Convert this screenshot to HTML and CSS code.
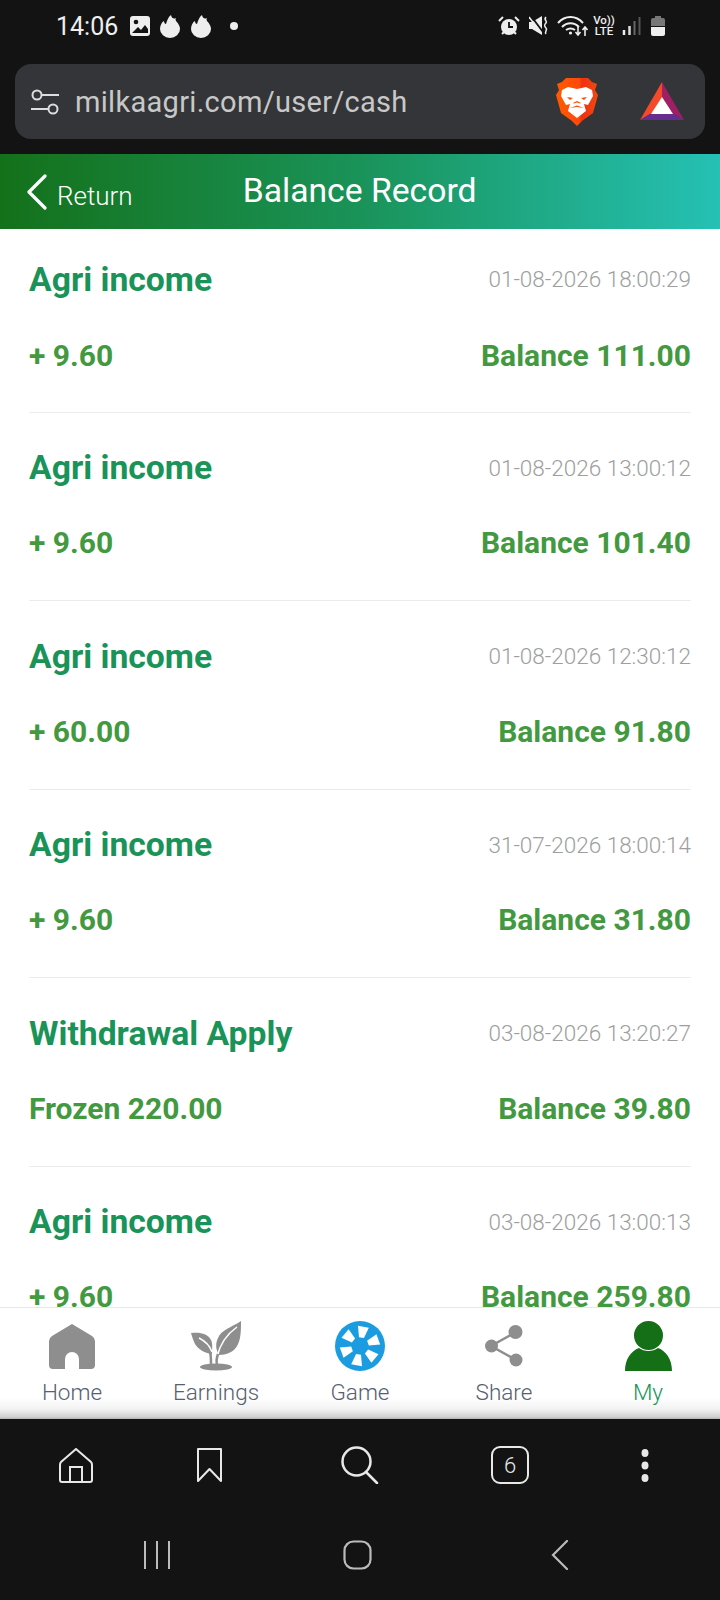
FILE: index.html
```html
<!DOCTYPE html>
<html lang="en">
<head>
<meta charset="utf-8">
<title>Balance Record</title>
<link rel="stylesheet" href="styles.css">
</head>
<body>
<div class="phone">
  <div class="status">
    <div class="status-left">
      <span class="time">14:06</span>
      <svg class="si" width="22" height="22" viewBox="0 0 22 22"><rect x="1" y="1" width="20" height="20" rx="3" fill="#eee"/><circle cx="7" cy="7" r="2.3" fill="#131313"/><path d="M3 18l6-6 3 3 4-5 3 4v4z" fill="#131313"/></svg>
      <svg class="si fl1" width="22" height="24" viewBox="0 0 22 24"><path d="M12 1c1 4 3 4 5 3 0 0-1 2 0 3 3 3 4 6 4 8a10 9 0 0 1-20 0c0-4 2-7 4-8 0 2 1 3 2 3 1-3 2-7 5-9z" fill="#eee"/></svg>
      <svg class="si fl2" width="22" height="24" viewBox="0 0 22 24"><path d="M12 1c1 4 3 4 5 3 0 0-1 2 0 3 3 3 4 6 4 8a10 9 0 0 1-20 0c0-4 2-7 4-8 0 2 1 3 2 3 1-3 2-7 5-9z" fill="#eee"/></svg>
      <span class="dot"></span>
    </div>
    <div class="status-right">
      <svg width="22" height="20" viewBox="0 0 22 20"><circle cx="11" cy="11" r="8" fill="#eee"/><path d="M11 6v5h4" fill="none" stroke="#131313" stroke-width="1.8"/><path d="M1 5l4-4M21 5l-4-4M4 18l2-2M18 18l-2-2" stroke="#eee" stroke-width="2"/></svg>
      <svg class="mute" width="20" height="20" viewBox="0 0 20 20"><path d="M0 6h3L13 0v19L3 13H0z" fill="#eee"/><path d="M2 0l12 16" stroke="#131313" stroke-width="1.800"/><path d="M0 1l12 16" stroke="#eee" stroke-width="1.600"/><path d="M17 1c-3 3 2 4 0 6s-2 3 0 5-2 4 0 6" fill="none" stroke="#eee" stroke-width="1.6"/></svg>
      <svg class="wifi" width="31" height="22" viewBox="0 0 31 22"><path d="M1 8c7-8 18-8 25 0M5 12c5-5 12-5 17 0M9 15c3-2 6-2 9 0" fill="none" stroke="#eee" stroke-width="2"/><circle cx="13.5" cy="18" r="1.6" fill="#eee"/><path d="M21 11v9m-2.500-3l2.500 3 2.500-3M28 21v-9m-2.500 3l2.500-3 2.500 3" fill="none" stroke="#eee" stroke-width="1.600"/></svg>
      <span class="volte"><span>Vo))</span><span>LTE</span></span>
      <svg class="signal" width="19" height="20" viewBox="0 0 19 20"><path d="M2 14v5" stroke="#eee" stroke-width="2.500"/><path d="M7.500 10v9" stroke="#ddd" stroke-width="2.500"/><path d="M12.500 5v14" stroke="#666" stroke-width="2"/><path d="M17.500 1v18" stroke="#555" stroke-width="2"/></svg>
      <svg class="batt" width="14" height="20" viewBox="0 0 14 20"><path d="M4 0h6v2h2a2 2 0 0 1 2 2v6H0V4a2 2 0 0 1 2-2h2z" fill="#777"/><path d="M0 11h14v7a2 2 0 0 1-2 2H2a2 2 0 0 1-2-2z" fill="#eee"/></svg>
    </div>
  </div>

  <div class="urlwrap">
    <div class="urlbar">
      <svg width="28" height="28" viewBox="0 0 28 28"><circle cx="6" cy="7" r="4.500" fill="none" stroke="#ddd" stroke-width="2"/><path d="M11 7h17M0 21h17" stroke="#ddd" stroke-width="2"/><circle cx="22" cy="21" r="4.500" fill="none" stroke="#ddd" stroke-width="2"/></svg>
      <span class="url">milkaagri.com/user/cash</span>
      <svg class="brave" width="42" height="49" viewBox="0 0 42 49"><defs><linearGradient id="bg" x1="0" x2="1" y1="0" y2="0"><stop offset="0" stop-color="#ff5a00"/><stop offset=".55" stop-color="#ff4a0a"/><stop offset=".62" stop-color="#f03010"/><stop offset="1" stop-color="#f04a10"/></linearGradient></defs><path d="M10 1h22l4 4 5 2-2 6 3 5-5 18-11 8-5 5-5-5-11-8-5-18 3-5-2-6 5-2z" fill="url(#bg)"/><path d="M6 13l6-3 9 2 9-2 6 3 1 6-5 9-4-1 2 7-9 7-9-7 2-7-4 1-5-9z" fill="#fff"/><path d="M11 20l6 1-3 2zM31 20l-6 1 3 2zM14 31l7-2.500 7 2.500-7-1zM17 26l4-2 4 2-1 .5-3-1-3 1z" fill="#f2500c"/></svg>
      <svg class="bat" width="44" height="39" viewBox="0 0 44 39"><path d="M22 0L0 38l22-13z" fill="#f4492a"/><path d="M22 0l22 38-22-13z" fill="#9e1f63"/><path d="M0 38h44L22 25z" fill="#662d91"/><path d="M22 15l11 17H11z" fill="#fff"/></svg>
    </div>
  </div>

  <header class="header">
    <div class="back">
      <svg width="22" height="36" viewBox="0 0 22 36"><path d="M19 2L3 18l16 16" fill="none" stroke="#fff" stroke-width="3.200" stroke-linecap="round" stroke-linejoin="round"/></svg>
      <span>Return</span>
    </div>
    <h1>Balance Record</h1>
  </header>

  <main class="list">
    <div class="rec"><div class="line"><span class="name">Agri income</span><span class="date">01-08-2026 18:00:29</span></div><div class="line"><span class="amt">+ 9.60</span><span class="amt">Balance 111.00</span></div></div>
    <div class="rec"><div class="line"><span class="name">Agri income</span><span class="date">01-08-2026 13:00:12</span></div><div class="line"><span class="amt">+ 9.60</span><span class="amt">Balance 101.40</span></div></div>
    <div class="rec"><div class="line"><span class="name">Agri income</span><span class="date">01-08-2026 12:30:12</span></div><div class="line"><span class="amt">+ 60.00</span><span class="amt">Balance 91.80</span></div></div>
    <div class="rec"><div class="line"><span class="name">Agri income</span><span class="date">31-07-2026 18:00:14</span></div><div class="line"><span class="amt">+ 9.60</span><span class="amt">Balance 31.80</span></div></div>
    <div class="rec"><div class="line"><span class="name">Withdrawal Apply</span><span class="date">03-08-2026 13:20:27</span></div><div class="line"><span class="amt">Frozen 220.00</span><span class="amt">Balance 39.80</span></div></div>
    <div class="rec"><div class="line"><span class="name">Agri income</span><span class="date">03-08-2026 13:00:13</span></div><div class="line"><span class="amt">+ 9.60</span><span class="amt">Balance 259.80</span></div></div>
  </main>

  <nav class="tabs">
    <div class="tab">
      <svg width="46" height="50" viewBox="0 0 46 50"><path d="M23 3L43 15q3 2 3 5v24q0 4-4 4H30V38a7 7 0 0 0-14 0V48H4q-4 0-4-4V20q0-3 3-5z" fill="#8e8e8e"/></svg>
      <span>Home</span>
    </div>
    <div class="tab">
      <svg width="52" height="50" viewBox="0 0 52 50"><ellipse cx="26" cy="46" rx="16" ry="3.500" fill="#8e8e8e"/><path d="M1 12c10-1 17 1 20 7 2 4 1 9 1 14-8-1-14-5-17-10C3 19 2 15 1 12z" fill="#8e8e8e"/><path d="M51 0c0 9 0 19-4 25-3 6-11 9-18 9-3-5-4-11-1-17C31 9 42 6 51 0z" fill="#8e8e8e"/><path d="M9 17c6 3 11 8 13 14M47 6C37 13 30 23 27 36" fill="none" stroke="#fff" stroke-width="1.500"/><path d="M21 43c0-5 0-9-1-12M27 43c-1-3 0-7 1-10" fill="none" stroke="#8e8e8e" stroke-width="2.500"/></svg>
      <span>Earnings</span>
    </div>
    <div class="tab">
      <svg width="50" height="50" viewBox="0 0 50 50"><circle cx="25" cy="25" r="25" fill="#1b9ce0"/><g fill="#fff"><path d="M19.500 5.500l11 0-3 11h-5z" transform="rotate(10 25 25)"/><path d="M19.500 5.500l11 0-3 11h-5z" transform="rotate(70 25 25)"/><path d="M19.500 5.500l11 0-3 11h-5z" transform="rotate(130 25 25)"/><path d="M19.500 5.500l11 0-3 11h-5z" transform="rotate(190 25 25)"/><path d="M19.500 5.500l11 0-3 11h-5z" transform="rotate(250 25 25)"/><path d="M19.500 5.500l11 0-3 11h-5z" transform="rotate(310 25 25)"/></g><circle cx="25" cy="25" r="7.500" fill="#1b9ce0"/></svg>
      <span>Game</span>
    </div>
    <div class="tab">
      <svg width="38" height="42" class="share" viewBox="0 0 38 42"><path d="M31 7L6 21l25 14" fill="none" stroke="#8e8e8e" stroke-width="2.500"/><circle cx="30.500" cy="7" r="7" fill="#8e8e8e"/><circle cx="6.500" cy="21" r="6.500" fill="#8e8e8e"/><circle cx="31" cy="35" r="6.500" fill="#8e8e8e"/></svg>
      <span>Share</span>
    </div>
    <div class="tab active">
      <svg width="47" height="50" viewBox="0 0 47 50"><circle cx="23.500" cy="14.500" r="14.500" fill="#156f17"/><path d="M0 50c0-12 6-20 14-23 5 4 14 4 19 0 8 3 14 11 14 23z" fill="#156f17"/></svg>
      <span>My</span>
    </div>
  </nav>

  <div class="bottom">
    <div class="toolbar">
      <svg width="34" height="35" viewBox="0 0 34 35"><path d="M17 1L32 14q1 1 1 3v15q0 2-2 2H3q-2 0-2-2V17q0-2 1-3z" fill="none" stroke="#e8e8e8" stroke-width="2"/><path d="M11 34V19h12v15" fill="none" stroke="#e8e8e8" stroke-width="2"/></svg>
      <svg width="25" height="34" viewBox="0 0 25 34"><path d="M1 1h23v32l-11.500-12L1 33z" fill="none" stroke="#e8e8e8" stroke-width="2" stroke-linejoin="round"/></svg>
      <svg width="38" height="38" viewBox="0 0 38 38"><circle cx="15.500" cy="15.500" r="14" fill="none" stroke="#e8e8e8" stroke-width="2.500"/><path d="M25 26l11 11" stroke="#e8e8e8" stroke-width="2.500" stroke-linecap="round"/></svg>
      <span class="count">6</span>
      <svg width="10" height="36" viewBox="0 0 10 36"><ellipse cx="5" cy="6" rx="3.500" ry="4" fill="#e8e8e8"/><ellipse cx="5" cy="18.500" rx="3.500" ry="4" fill="#e8e8e8"/><ellipse cx="5" cy="31" rx="3.500" ry="4" fill="#e8e8e8"/></svg>
    </div>
    <div class="sysnav">
      <svg width="28" height="30" viewBox="0 0 28 30"><path d="M2 1v28M14 1v28M26 1v28" stroke="#bbb" stroke-width="2"/></svg>
      <svg width="29" height="30" viewBox="0 0 29 30"><rect x="1.500" y="1.500" width="26" height="27" rx="9" fill="none" stroke="#bbb" stroke-width="2.200"/></svg>
      <svg width="18" height="30" viewBox="0 0 18 30"><path d="M16 1L2 15l14 14" fill="none" stroke="#bbb" stroke-width="2.200" stroke-linecap="round"/></svg>
    </div>
  </div>
</div>
</body>
</html>
```

FILE: styles.css
```css
* { box-sizing: border-box; }
html, body { margin: 0; padding: 0; background: #131313; }
.phone {
  width: 720px;
  height: 1600px;
  display: flex;
  flex-direction: column;
  overflow: hidden;
  font-family: Roboto, "Liberation Sans", sans-serif;
  background: #131313;
}
svg { display: block; flex: none; }

/* status bar */
.status {
  height: 52px;
  flex: none;
  display: flex;
  justify-content: space-between;
  align-items: center;
  padding: 0 55px 0 56px;
  color: #eee;
}
.status-left, .status-right { display: flex; align-items: center; }
.time { font-size: 25px; font-weight: 400; width: 73px; }
.fl1 { margin-left: 8px; }
.fl2 { margin-left: 9px; }
.dot { width: 8px; height: 8px; border-radius: 50%; background: #eee; margin-left: 18px; }
.mute { margin-left: 9px; }
.wifi { margin-left: 8px; }
.volte {
  display: flex;
  flex-direction: column;
  font-size: 11.500px;
  line-height: 11px;
  font-weight: 500;
  width: 22px;
  margin-left: 5px;
  align-items: center;
}
.signal { margin-left: 7px; }
.batt { margin-left: 10px; }

/* address bar */
.urlwrap { height: 102px; flex: none; padding: 12px 15px 15px; }
.urlbar {
  height: 75px;
  background: #343538;
  border-radius: 16px;
  display: flex;
  align-items: center;
  padding: 0 21px 0 16px;
}
.url {
  flex: 1;
  margin-left: 16px;
  color: #c8c8c8;
  font-size: 29px;
  font-weight: 400;
  letter-spacing: 0.3px;
  white-space: nowrap;
}
.bat { margin-left: 42px; }

/* page header */
.header {
  height: 75px;
  flex: none;
  display: flex;
  align-items: center;
  padding-left: 26px;
  background: linear-gradient(90deg, #14711a 0%, #1a9359 50%, #25c1b4 100%);
  color: #fff;
}
.back { display: flex; align-items: center; gap: 9px; font-size: 26px; font-weight: 300; }
.back span { padding-top: 9px; }
.header h1 {
  margin: -3px 0 0 110px;
  font-size: 33.700px;
  font-weight: 400;
  white-space: nowrap;
}

/* list */
.list {
  flex: 1;
  min-height: 0;
  overflow: hidden;
  background: #fff;
  padding: 0 29px;
}
.rec {
  height: 188.500px;
  border-bottom: 1px solid #ececec;
  padding-top: 30px;
  display: flex;
  flex-direction: column;
  gap: 25px;
}
.rec:first-child { height: 183.500px; padding-top: 25px; gap: 26px; }
.line { display: flex; justify-content: space-between; align-items: center; height: 50px; white-space: nowrap; }
.name { font-size: 33.700px; font-weight: 700; color: #1a9359; }
.date { font-size: 22.500px; font-weight: 300; color: #9e9e9e; }
.amt { font-size: 30px; font-weight: 700; color: #43993f; }

/* bottom tabs */
.tabs {
  height: 112px;
  flex: none;
  display: grid;
  grid-template-columns: repeat(5, 144px);
  background: linear-gradient(180deg, #fff 0, #fff 90px, #f2f2f2 101px, #d0d0d0 109px, #a0a0a0 112px);
  border-top: 1px solid #e8e8e8;
}
.tab {
  display: flex;
  flex-direction: column;
  align-items: center;
  padding-top: 13px;
  height: 100px;
  font-size: 22.500px;
  font-weight: 300;
  color: #56606f;
}
.tab span { margin-top: 8px; line-height: 26px; }
.tab .share { margin: 4px 0; }
.tab.active { color: #1a9359; }

/* browser toolbar */
.bottom { height: 181px; flex: none; background: #131313; }
.toolbar { height: 100px; display: flex; align-items: center; padding: 0 0 8px 59px; }
.toolbar svg:nth-child(2) { margin-left: 104px; }
.toolbar svg:nth-child(3) { margin-left: 119px; }
.toolbar svg:nth-child(5) { margin-left: 111px; }
.count {
  width: 38px;
  height: 38px;
  margin-left: 112px;
  border: 2.500px solid #e8e8e8;
  border-radius: 9px;
  color: #e8e8e8;
  font-size: 22px;
  font-weight: 300;
  display: flex;
  align-items: center;
  justify-content: center;
  flex: none;
}
.sysnav { height: 81px; display: flex; align-items: flex-start; padding: 21px 0 0 143px; }
.sysnav svg:nth-child(2) { margin-left: 172px; }
.sysnav svg:nth-child(3) { margin-left: 179px; }
```
